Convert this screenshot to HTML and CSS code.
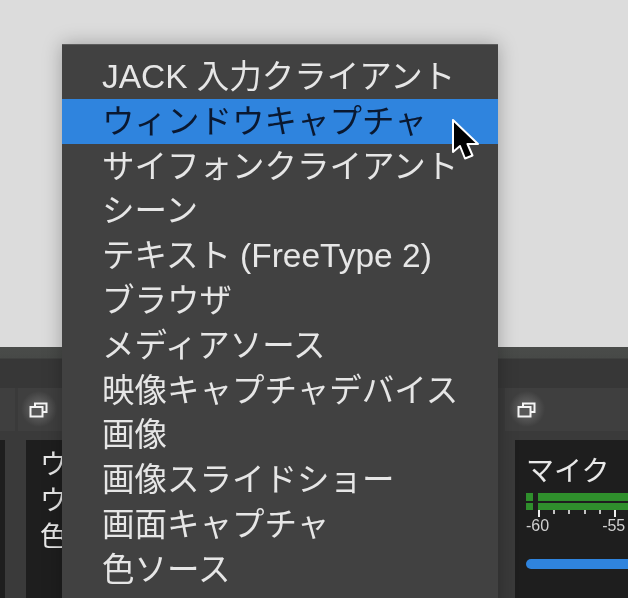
FILE: index.html
```html
<!DOCTYPE html>
<html lang="ja">
<head>
  <meta charset="UTF-8" />
  <title>ソースを追加</title>
  <link rel="stylesheet" href="styles.css">
</head>
<body>

  <div class="preview"></div>

  <div class="dock">
    <div class="dock-head"></div>
    <div class="toolbar">
      <div class="tool-cell tool-stub"></div>
      <div class="tool-cell tool-left">
        <svg class="float-icon" viewBox="0 0 19 16" width="19" height="16">
          <path d="M6 4V1.5h11.5V10H14" />
          <rect x="1.5" y="5" width="12" height="9.5" />
        </svg>
      </div>
      <div class="tool-cell tool-right">
        <svg class="float-icon" viewBox="0 0 19 16" width="19" height="16">
          <path d="M6 4V1.5h11.5V10H14" />
          <rect x="1.5" y="5" width="12" height="9.5" />
        </svg>
      </div>
    </div>
    <div class="panes">
      <div class="pane pane-edge"></div>
      <div class="pane pane-sources">
        <p>ウ</p>
        <p>ウ</p>
        <p>色</p>
      </div>
      <div class="pane pane-mixer">
        <div class="mixer-name">マイク</div>
        <div class="meter">
          <div class="meter-row"><span class="seg"></span><span class="bar"></span></div>
          <div class="meter-row"><span class="seg"></span><span class="bar"></span></div>
        </div>
        <div class="ticks">
          <i class="major"></i><i></i><i></i><i></i><i></i><i class="major"></i>
        </div>
        <div class="scale"><span>-60</span><span>-55</span></div>
        <div class="slider"></div>
      </div>
    </div>
  </div>

  <ul class="menu">
    <li><span class="latin">JACK</span> 入力クライアント</li>
    <li class="active">ウィンドウキャプチャ</li>
    <li>サイフォンクライアント</li>
    <li>シーン</li>
    <li>テキスト <span class="latin">(FreeType 2)</span></li>
    <li>ブラウザ</li>
    <li>メディアソース</li>
    <li>映像キャプチャデバイス</li>
    <li>画像</li>
    <li>画像スライドショー</li>
    <li>画面キャプチャ</li>
    <li>色ソース</li>
  </ul>

  <svg class="cursor" viewBox="0 0 30 46" width="30" height="46">
    <path d="M2 1V33L9 27L14 39.5L21.5 36.5L16.5 25H27Z" />
  </svg>

</body>
</html>
```

FILE: styles.css
```css
html, body {
  height: 100%;
}

body {
  margin: 0;
  overflow: hidden;
  position: relative;
  background: #dcdcdc;
  font-family: "Liberation Sans", "Noto Sans CJK JP", sans-serif;
  color: #e8e8e8;
  filter: blur(0.45px);
}

.preview {
  height: 347px;
  background: #dcdcdc;
}

.dock {
  height: 251px;
  background: #3a3a3a;
  display: flex;
  flex-direction: column;
}

.dock-head {
  height: 41px;
  background: linear-gradient(#4a4c4a 0, #474947 11px, #373737 12px);
}

.toolbar {
  height: 43px;
  display: flex;
}

.tool-cell {
  background: #3f3f3f;
  display: flex;
  align-items: center;
  box-sizing: border-box;
}

.tool-stub {
  width: 15px;
}

.tool-left {
  width: 44px;
  margin-left: 3px;
  padding-left: 11px;
  background: radial-gradient(circle at 21px 21px, #575757 0, #575757 9px, #3f3f3f 18px);
}

.tool-right {
  width: 123px;
  margin-left: auto;
  padding-left: 12px;
  background: radial-gradient(circle at 22px 21px, #575757 0, #575757 9px, #3f3f3f 18px);
}

.float-icon {
  fill: none;
  stroke: #f4f4f4;
  stroke-width: 2;
}

.panes {
  flex: 1;
  margin-top: 9px;
  display: flex;
  overflow: hidden;
}

.pane {
  background: #1e1e1e;
}

.pane-edge {
  width: 5px;
}

.pane-sources {
  width: 36px;
  margin-left: 21px;
  padding: 7px 0 0 14px;
  box-sizing: border-box;
  font-size: 27px;
  line-height: 36px;
  overflow: hidden;
}

.pane-sources p {
  margin: 0;
}

.pane-mixer {
  margin-left: auto;
  width: 113px;
  padding: 13px 0 0 11px;
  box-sizing: border-box;
  overflow: hidden;
}

.mixer-name {
  font-size: 28px;
  line-height: 38px;
  white-space: nowrap;
  height: 38px;
}

.meter {
  margin-top: 2px;
  display: flex;
  flex-direction: column;
  gap: 2px;
}

.meter-row {
  display: flex;
  gap: 5px;
  height: 7.5px;
}

.seg {
  width: 7px;
  background: #2f8f2c;
}

.bar {
  flex: 1;
  background: #2f8f2c;
}

.ticks {
  display: flex;
  gap: 13.2px;
  height: 7px;
  align-items: flex-start;
  padding-left: 12px;
}

.ticks i {
  width: 2px;
  height: 4px;
  background: #c4c4c4;
}

.ticks i.major {
  height: 7px;
  background: #eeeeee;
}

.scale {
  display: flex;
  gap: 53px;
  font-size: 16px;
  line-height: 16px;
  color: #d0d0d0;
  margin-top: 1px;
  white-space: nowrap;
}

.slider {
  margin-top: 25px;
  height: 10px;
  border-radius: 5px 0 0 5px;
  background: #2f84de;
}

.menu {
  position: absolute;
  left: 62px;
  top: 44px;
  width: 436px;
  height: 570px;
  box-sizing: border-box;
  margin: 0;
  padding: 10px 0 0;
  list-style: none;
  background: #414141;
  box-shadow: 0 0 18px rgba(0, 0, 0, 0.28), inset 0 1px #5c5c5c;
  font-size: 32.5px;
}

.menu li {
  height: 44.8px;
  line-height: 46px;
  padding-left: 40px;
  white-space: nowrap;
  color: #e6e6e6;
}

.menu .latin {
  font-size: 33.5px;
}

.menu li.active {
  background: #2f84de;
  color: #0a1830;
}

.cursor {
  position: absolute;
  left: 451px;
  top: 119px;
  fill: #000000;
  stroke: #ffffff;
  stroke-width: 2;
  stroke-linejoin: round;
}
```
